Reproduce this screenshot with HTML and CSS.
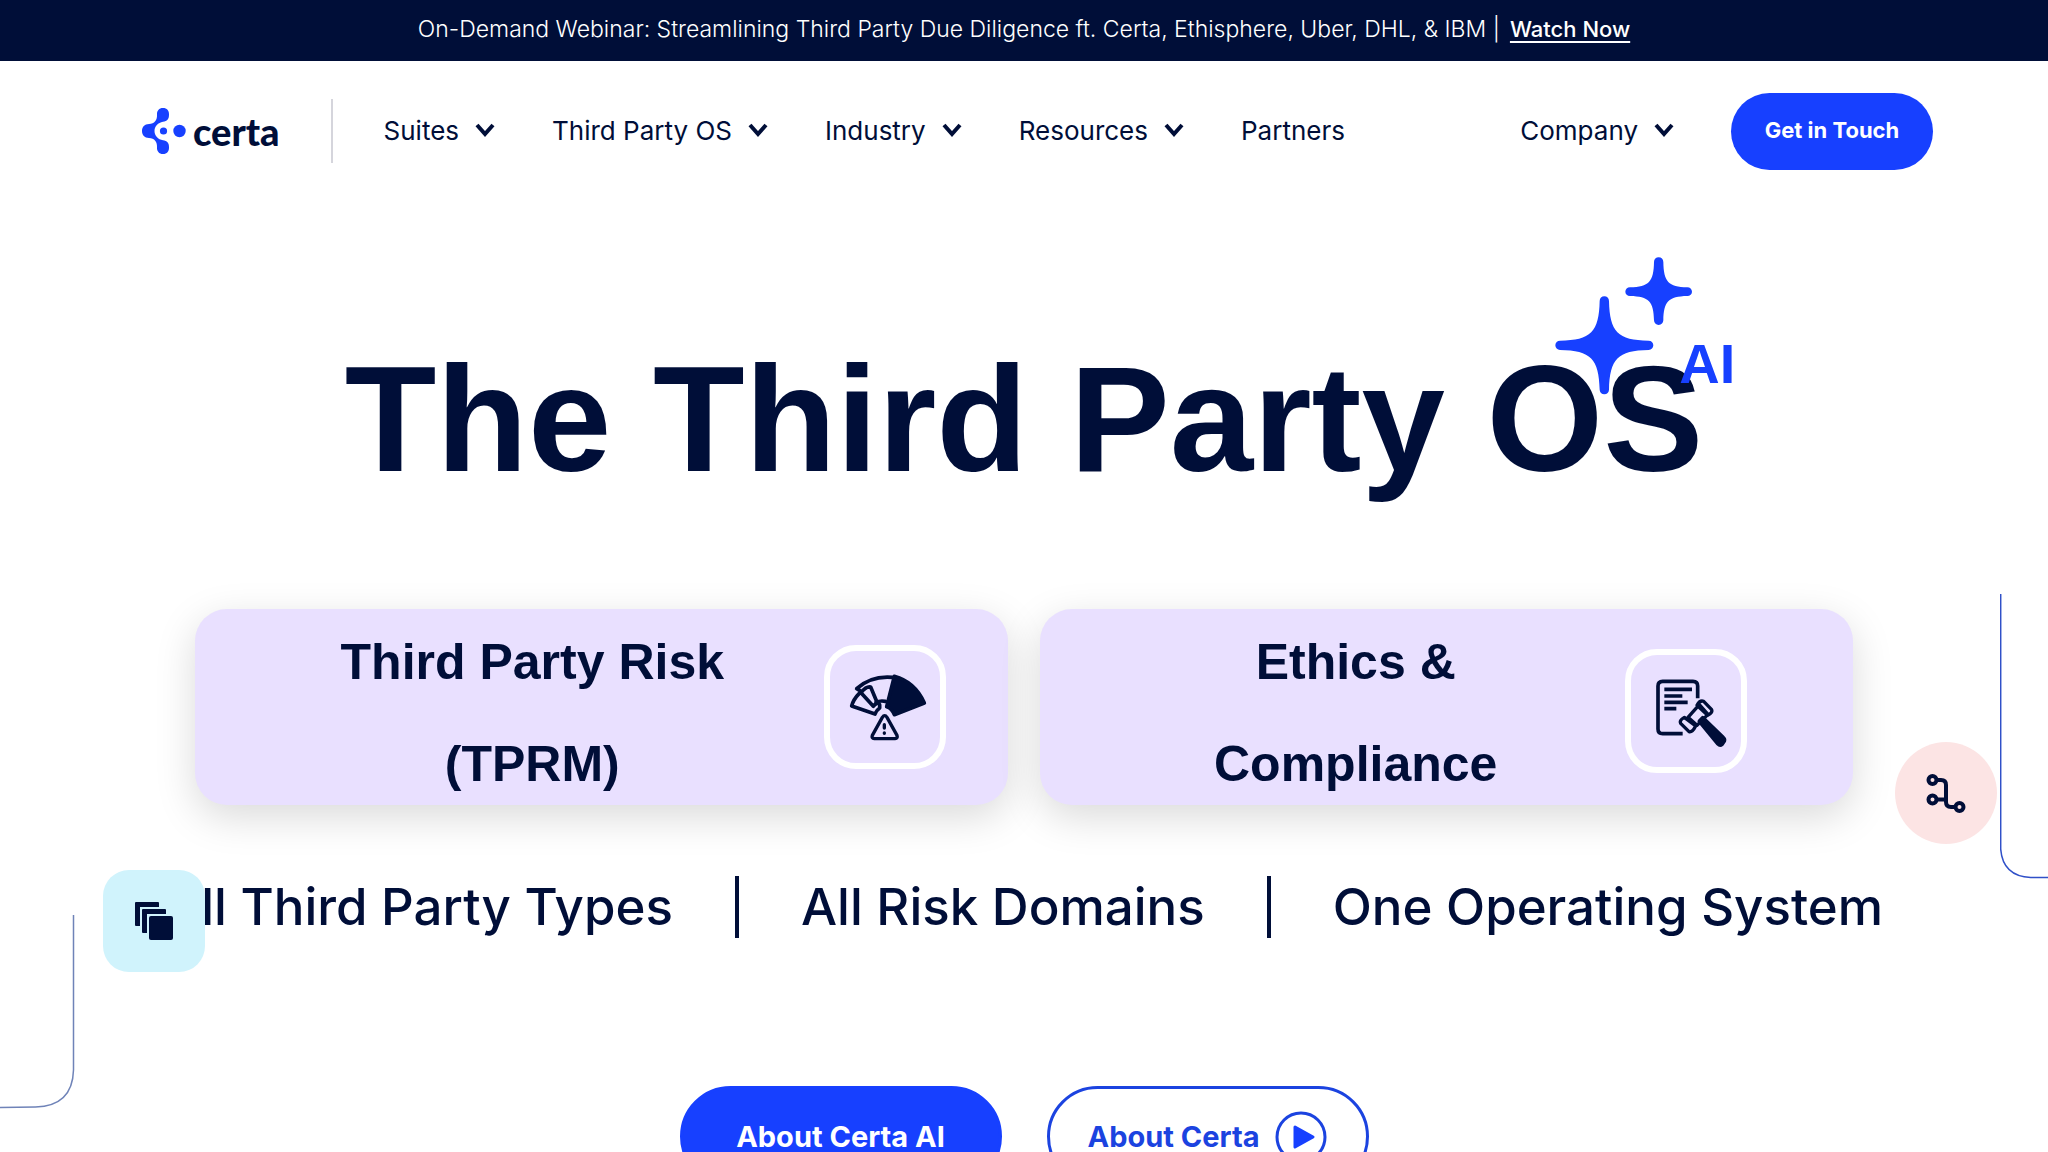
FILE: index.html
```html
<!DOCTYPE html>
<html lang="en">
<head>
    <meta charset="UTF-8">
    <meta name="viewport" content="width=device-width, initial-scale=1.0">
    <title>Certa - The Third Party OS</title>
    <link rel="stylesheet" href="styles.css">
</head>
<body>
    <!-- Announcement bar -->
    <div class="banner">
        <span>On-Demand Webinar: Streamlining Third Party Due Diligence ft. Certa, Ethisphere, Uber, DHL, &amp; IBM |</span>
        <a href="#">Watch Now</a>
    </div>

    <!-- Header -->
    <header class="header">
        <a class="logo" href="#">
            <svg width="46" height="48" viewBox="0 0 46 48" fill="#1740ff" aria-hidden="true">
                <path d="M22 1c4 0 6 2.500 6 6.500 0 5-2 6.500-6 7.200-5 .9-8.500 4.500-8.500 9.300s3.500 8.400 8.500 9.300c4 .7 6 2.200 6 7.200 0 4-2 6.500-6 6.500s-6.300-2.700-6-7c.3-5-2.500-8.800-8-9-4.500-.2-7-3-7-7s2.500-6.800 7-7c5.500-.2 8.300-4 8-9-.3-4.300 2-7 6-7z"/>
                <circle cx="22.500" cy="24" r="3.600"/>
                <circle cx="38.500" cy="24" r="6.200"/>
            </svg>
            <span>certa</span>
        </a>
        <nav class="nav">
            <a href="#">Suites <svg class="chevron" viewBox="0 0 20 14"><path d="M2 2l8 9 8-9"/></svg></a>
            <a href="#">Third Party OS <svg class="chevron" viewBox="0 0 20 14"><path d="M2 2l8 9 8-9"/></svg></a>
            <a href="#">Industry <svg class="chevron" viewBox="0 0 20 14"><path d="M2 2l8 9 8-9"/></svg></a>
            <a href="#">Resources <svg class="chevron" viewBox="0 0 20 14"><path d="M2 2l8 9 8-9"/></svg></a>
            <a href="#">Partners</a>
            <a class="company" href="#">Company <svg class="chevron" viewBox="0 0 20 14"><path d="M2 2l8 9 8-9"/></svg></a>
        </nav>
        <button class="btn-touch" type="button">Get in Touch</button>
    </header>

    <!-- Hero -->
    <main class="hero">
        <h1 class="title">
            The Third Party OS
            <svg class="sparkles" width="138" height="138" viewBox="0 0 414 414" fill="#1740ff" aria-hidden="true">
                <path d="M148 118c8 0 14 6 14 14 2 92 26 118 119 119 8 0 14 6 14 14s-6 14-14 14c-93 1-117 28-119 119 0 8-6 14-14 14s-14-6-14-14c-2-91-26-118-119-119-8 0-14-6-14-14s6-14 14-14c93-1 117-27 119-119 0-8 6-14 14-14z"/>
                <path d="M311 1c8 0 14 6 14 14 1 59 15 75 72 76 8 0 14 6 14 13s-6 13-14 13c-57 1-71 17-72 73 0 8-6 14-14 14s-14-6-14-14c-1-56-15-72-72-73-8 0-14-6-14-13s6-13 14-13c57-1 71-17 72-76 0-8 6-14 14-14z"/>
            </svg>
            <span class="ai">AI</span>
        </h1>

        <div class="cards">
            <section class="card card-risk">
                <h2>Third Party Risk<br>(TPRM)</h2>
                <div class="card-icon">
                    <svg viewBox="90 95 330 336" fill="none" stroke="#000e38" stroke-width="11" stroke-linejoin="round" stroke-linecap="round" aria-hidden="true">
                        <path d="M283 171q62 17 90 80l-90 35q-8-20-23-24z" fill="#000e38"/>
                        <path d="M180 214l-10-6q44-40 108-34M228 249q12-6 28-3"/>
                        <path d="M183 220q16-20 29-17l20 48q-8 4-12 10zM178 222q-18 18-23 38l70 24q5-12 14-18v-10"/>
                        <path d="M247 294q7-10 14 0l30 54q3 9-6 10h-62q-9-1-6-10zM253 316v10M253 341v1" stroke-width="10"/>
                    </svg>
                </div>
            </section>
            <section class="card card-ethics">
                <h2>Ethics &amp;<br>Compliance</h2>
                <div class="card-icon">
                    <svg viewBox="95 109 330 336" fill="none" stroke="#000e38" stroke-width="11" stroke-linejoin="round" aria-hidden="true">
                        <path d="M295 239v-37q0-14-14-14h-91q-14 0-14 14v129q0 14 14 14h60"/>
                        <path d="M195 212h83M195 232h54M195 251h70M195 270h36"/>
                        <path d="M300 308l56 68q6 6 13 0l6-9q2-6-3-10l-62-60z" fill="#000e38"/>
                        <path d="M300 258l-34 38 27 24 33-33zM293 260q8-16 20-12l24 25q4 9-12 17zM255 296q-16 9-11 18l25 25q10 3 20-17z" stroke-width="10"/>
                    </svg>
                </div>
            </section>
        </div>

        <ul class="points">
            <li>All Third Party Types</li>
            <li>All Risk Domains</li>
            <li>One Operating System</li>
        </ul>

        <div class="actions">
            <button class="btn btn-primary" type="button">About Certa AI</button>
            <button class="btn btn-outline" type="button">
                About Certa
                <svg width="52" height="52" viewBox="0 0 52 52" aria-hidden="true">
                    <circle cx="26" cy="26" r="24" fill="none" stroke="#1b43e0" stroke-width="3"/>
                    <path d="M20 16l18 10-18 10z" fill="#1740ff" stroke="#1740ff" stroke-width="3" stroke-linejoin="round"/>
                </svg>
            </button>
        </div>
    </main>

    <!-- Floating decorations -->
    <svg class="line line-left" width="76" height="196" viewBox="0 0 76 196" fill="none" aria-hidden="true">
        <path d="M73.500 0v155q-1 36-38 37l-36 .500"/>
    </svg>
    <svg class="line line-right" width="48" height="286" viewBox="0 0 48 286" fill="none" aria-hidden="true">
        <path d="M.700 0v255q2 27 30 28.500h18" stroke="#3050c8"/>
    </svg>
    <div class="float float-stack">
        <svg width="40" height="40" viewBox="0 0 40 40" fill="#000e38" aria-hidden="true">
            <path d="M2 1h22q1 0 1 1v4H6v19H2q-1 0-1-1V2q0-1 1-1z"/>
            <path d="M9 8h22q1 0 1 1v4H13v19H9q-1 0-1-1V9q0-1 1-1z"/>
            <rect x="15" y="15" width="24" height="24" rx="2"/>
        </svg>
    </div>
    <div class="float float-flow">
        <svg width="40" height="40" viewBox="0 0 40 40" fill="none" stroke="#000e38" stroke-width="4" aria-hidden="true">
            <circle cx="6.500" cy="7" r="4"/>
            <circle cx="6.500" cy="26.500" r="4"/>
            <circle cx="33.500" cy="34" r="4"/>
            <path d="M11 7h4q5 0 5 5v17q0 5 5 5h4M11 26.500h9"/>
        </svg>
    </div>
</body>
</html>
```

FILE: styles.css
```css
* {
    box-sizing: border-box;
}

body {
    position: relative;
    margin: 0;
    height: 100vh;
    overflow: hidden;
    font-family: Inter, "Liberation Sans", sans-serif;
    color: #000e38;
    background-color: #fff;
}

a {
    color: inherit;
    text-decoration: none;
}

button {
    font-family: inherit;
    font-weight: 700;
    cursor: pointer;
}

/* Announcement bar */
.banner {
    display: flex;
    justify-content: center;
    align-items: center;
    gap: 10px;
    height: 61px;
    padding-bottom: 3px;
    font-size: 23px;
    font-weight: 300;
    color: #fff;
    background-color: #000e38;
}

.banner a {
    font-size: 22px;
    font-weight: 500;
    text-decoration: underline;
    text-underline-offset: 4px;
}

/* Header */
.header {
    display: flex;
    align-items: center;
    height: 140px;
    padding: 0 115px 0 141px;
}

.logo {
    display: flex;
    align-items: center;
    gap: 6px;
    height: 64px;
    padding-right: 51px;
    border-right: 2px solid #d5d5dc;
    font-family: Lato, sans-serif;
    font-size: 38px;
    font-weight: 900;
    line-height: 48px;
}

.nav {
    display: flex;
    flex: 1;
    align-items: center;
    gap: 57px;
    padding: 0 57px 2px 51px;
    font-size: 26px;
    font-weight: 400;
}

.nav a {
    display: flex;
    align-items: center;
    gap: 16px;
    white-space: nowrap;
}

.nav .company {
    margin-left: auto;
}

.chevron {
    width: 20px;
    height: 14px;
    fill: none;
    stroke: #000e38;
    stroke-width: 4;
}

.btn-touch {
    width: 202px;
    height: 77px;
    padding-bottom: 4px;
    border: none;
    border-radius: 39px;
    font-size: 22px;
    color: #fff;
    background-color: #1740ff;
}

/* Hero */
.hero {
    display: flex;
    flex-direction: column;
    align-items: center;
}

.title {
    position: relative;
    margin: 134px 0 0;
    font-family: "Liberation Sans", Arial, sans-serif;
    font-size: 150px;
    font-weight: 700;
    line-height: 168px;
    white-space: nowrap;
}

.sparkles {
    position: absolute;
    top: -78px;
    right: 10px;
}

.ai {
    position: absolute;
    top: -3px;
    right: -32px;
    font-size: 56px;
    line-height: 64px;
    color: #1740ff;
}

.cards {
    display: grid;
    grid-template-columns: 1fr 1fr;
    gap: 32px;
    width: 81%;
    margin-top: 106px;
}

.card {
    display: flex;
    height: 196px;
    border-radius: 32px;
    background-color: #e9e0ff;
    box-shadow: 0 12px 40px rgba(0, 0, 0, 0.15);
}

.card h2 {
    flex: 1;
    margin: 2px 0 0;
    font-family: "Liberation Sans", Arial, sans-serif;
    font-size: 50px;
    line-height: 102px;
    text-align: center;
    white-space: nowrap;
}

.card-risk {
    padding: 0 62px 0 46px;
}

.card-ethics {
    padding: 8px 106px 0 46px;
}

.card-ethics h2 {
    margin-top: -6px;
}

.card-icon {
    align-self: center;
    width: 122px;
    height: 124px;
    border: 6px solid #fff;
    border-radius: 32px;
}

.card-icon svg {
    display: block;
    width: 110px;
    height: 112px;
}

.points {
    display: flex;
    align-items: center;
    margin: 71px 0 0;
    padding: 0;
    list-style: none;
    font-size: 51px;
    font-weight: 500;
    line-height: 62px;
    white-space: nowrap;
}

.points li + li {
    margin-left: 62px;
    padding-left: 62px;
    border-left: 4px solid #000e38;
}

/* Buttons */
.actions {
    display: flex;
    gap: 45px;
    margin-top: 148px;
}

.btn {
    display: flex;
    justify-content: center;
    align-items: center;
    gap: 16px;
    width: 322px;
    height: 101px;
    border: 3px solid #1b43e0;
    border-radius: 51px;
    font-size: 29px;
    white-space: nowrap;
}

.btn-primary {
    border-color: #1740ff;
    color: #fff;
    background-color: #1740ff;
}

.btn-outline {
    color: #1b43e0;
    background-color: #fff;
}

/* Floating decorations */
.line {
    position: absolute;
    stroke: #6f83b8;
    stroke-width: 1.5;
}

.line-left {
    top: 915px;
    left: 0;
}

.line-right {
    top: 594px;
    right: 0;
}

.float {
    position: absolute;
    display: flex;
    justify-content: center;
    align-items: center;
    width: 102px;
    height: 102px;
}

.float-stack {
    top: 870px;
    left: 103px;
    border-radius: 26px;
    background-color: #d0f3fc;
}

.float-flow {
    top: 742px;
    right: 51px;
    border-radius: 50%;
    background-color: #fce4e4;
}
```
